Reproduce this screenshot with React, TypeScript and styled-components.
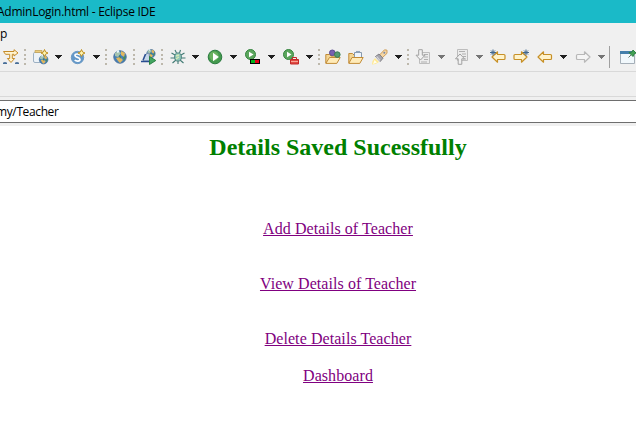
import React from "react";
import styled, { createGlobalStyle } from "styled-components";

const GlobalStyle = createGlobalStyle`
  * { box-sizing: border-box; }
  body { margin: 0; background: #fff; overflow: hidden; }
`;

const Window = styled.div`
  display: flex;
  flex-direction: column;
  width: 636px;
  height: 446px;
  overflow: hidden;
  background: #fff;
  color: #000;
  font-family: "Open Sans", "Noto Sans", sans-serif;
  font-size: 12px;
`;

const TitleBar = styled.header`
  display: flex;
  flex: none;
  height: 23px;
  line-height: 23px;
  background: #1abac8;
  white-space: pre;
`;

const TitleText = styled.span`
  margin-left: -3px;
  letter-spacing: -0.26px;
`;

const MenuBar = styled.nav`
  flex: none;
  height: 21px;
  line-height: 21px;
  background: #f0f0f0;
`;

const ToolBar = styled.div`
  display: flex;
  flex: none;
  align-items: center;
  height: 28px;
  padding-bottom: 1px;
  background: #f0f0f0;
  border-bottom: 1px solid #d9d9d9;
`;

const Slot = styled.span<{ $gap: number; $w: number }>`
  display: flex;
  flex: none;
  align-items: center;
  justify-content: center;
  width: ${(p) => p.$w}px;
  height: 26px;
  margin-left: ${(p) => p.$gap}px;
  svg { display: block; flex: none; }
`;

const Divider = styled.span`
  width: 1px;
  height: 22px;
  background: #a0a0a0;
`;

const TabStrip = styled.div`
  flex: none;
  height: 25px;
  background: #f0f0f0;
  border-bottom: 1px solid #d9d9d9;
`;

const AddressRow = styled.div`
  flex: none;
  padding: 3px 0;
  background: #f0f0f0;
`;

const AddressField = styled.div`
  height: 23px;
  line-height: 21px;
  background: #fff;
  border: solid #6e6e6e;
  border-width: 1px 0;
  white-space: pre;
  letter-spacing: -0.38px;
  text-indent: -4px;
`;

const Page = styled.main`
  display: flex;
  flex-direction: column;
  align-items: center;
  padding: 8px 0 0 40px;
  font-family: "Liberation Serif", "Times New Roman", serif;
`;

const Heading = styled.h2`
  margin: 0 0 59px;
  color: #008000;
  font-size: 24px;
  line-height: 27px;
  font-weight: bold;
`;

const PageLink = styled.a<{ $after: number }>`
  margin-bottom: ${(p) => p.$after}px;
  color: #800080;
  font-size: 16px;
  line-height: 18px;
  letter-spacing: 0.07px;
  text-decoration: underline;
  text-decoration-thickness: 1px;
  text-decoration-skip-ink: none;
`;

type Kids = { children: React.ReactNode };
const Icon = ({ children }: Kids) => (
  <svg width="16" height="16" viewBox="0 0 16 16" fill="none">{children}</svg>
);

const Caret = ({ dim }: { dim?: boolean }) => (
  <svg width="7" height="4" viewBox="0 0 7 4" shapeRendering="crispEdges">
    <path d="M0 0H7V1H6V2H5V3H4V4H3V3H2V2H1V1H0Z" fill={dim ? "#757575" : "#202020"} />
  </svg>
);

const Grip = () => (
  <svg width="2" height="16" viewBox="0 0 2 16" shapeRendering="crispEdges">
    {[0, 5, 9, 14].map((y) => <path key={y} d={`M0 ${y}h2v2H0z`} fill="#bdb8ac" />)}
  </svg>
);

const Sparkle = () => (
  <path d="M11.5 .5L12.6 3L15 4L12.6 5.2L11.5 7.5L10.4 5.2L8 4L10.4 3Z" fill="#fff5b0" stroke="#c09022" strokeWidth="1" />
);

const Earth = () => (
  <>
    <circle cx="8" cy="8" r="6.2" fill="#4380b9" stroke="#4b719c" />
    <path d="M3 4L6 2L9 4L6 8L3 7Z" fill="#a6c4b0" />
    <path d="M9 2L13 4L12 8L9 6ZM4 9L8 8L11 11L8 14L6 12Z" fill="#e0b75f" />
    <path d="M7 6L9 8L8 10Z" fill="#397c4d" />
    <path d="M11 8L14 7L12 12Z" fill="#4c8d55" />
    <path d="M5 3L7 2" stroke="#e8faff" strokeWidth="2" />
  </>
);

const StepFilter = () => (
  <Icon>
    <path d="M.5 2.5H11V.7L15 3.9L11 7V5.3H9.3V9.5H11.6L8 13.5L4.4 9.5H6.7V5.3H2.5Z" fill="#fff4d0" stroke="#c58b2a" />
    <path d="M0 14.2H4M2 13V15M12 14.2H16M14 13V15" stroke="#496f99" strokeWidth="1.4" />
  </Icon>
);
const NewProject = () => (
  <Icon>
    <path d="M.5 4.5Q.5 3.5 2 3.5H10.5V13.5H2Q.5 13.5 .5 12Z" fill="#edf3f8" stroke="#9db1c3" />
    <path d="M2 1.5H9V3.5H2Z" fill="#edce7c" stroke="#c5a45a" strokeWidth=".8" />
    <g transform="translate(5 5) scale(.7)"><Earth /></g>
    <Sparkle />
  </Icon>
);
const Servlet = () => (
  <Icon>
    <circle cx="7.5" cy="8.5" r="6.2" fill="#6498c9" stroke="#6c9ac4" />
    <path d="M10 6.2C8.5 4.6 5 4.5 5 6.5C5 8.8 10 8 10 10.4C10 12.5 6.2 12.5 4.7 11" stroke="#fff" strokeWidth="1.7" />
    <Sparkle />
  </Icon>
);
const ServiceExplorer = () => (
  <Icon>
    <g transform="translate(4.5 -.8) scale(.68)"><Earth /></g>
    <path d="M2 12L5 5L8 4L9 12Z" fill="#c6d6ea" stroke="#7890ad" />
    <path d="M0 12.5H8M4.5 5L2 11" stroke="#294d91" strokeWidth="1.4" />
    <path d="M8.5 7.5L14.8 11.5L8.5 15.5Z" fill="#42a560" stroke="#2a8044" />
  </Icon>
);
const Bug = () => (
  <Icon>
    <path d="M5 1L6.5 4M10.5 1L9.5 4M1.5 4L5 6M14.5 4L11 6M.5 9H5M11 9H15.5M2.5 14L6 11M13.5 14L10 11M8 15V12" stroke="#427b74" strokeWidth="1.1" />
    <ellipse cx="8" cy="8" rx="3.4" ry="4.1" fill="#91c6b7" stroke="#4a8180" />
    <path d="M6 7L9 6M6 10L9 8" stroke="#d5eab5" strokeWidth="1.5" />
  </Icon>
);
const Run = () => (
  <Icon>
    <circle cx="8" cy="8" r="6.8" fill="#43994d" stroke="#2b7b40" />
    <circle cx="7" cy="7" r="4.6" fill="#76b965" fillOpacity=".75" />
    <path d="M6 3.8L11.8 8L6 12.2Z" fill="#fff" />
  </Icon>
);
const Coverage = () => (
  <Icon>
    <circle cx="5.5" cy="5.5" r="5" fill="#5ba65d" stroke="#35853f" />
    <path d="M4 2.7L8.5 5.5L4 8.3Z" fill="#fff" />
    <path d="M5 10H15V15H5Z" fill="#000" />
    <path d="M6 11H10V14H6Z" fill="#00b51d" /><path d="M10 11H14V14H10Z" fill="#e00018" />
  </Icon>
);
const ExternalTools = () => (
  <Icon>
    <circle cx="5.5" cy="5.5" r="5" fill="#5ba65d" stroke="#35853f" />
    <path d="M4 2.7L8.5 5.5L4 8.3Z" fill="#fff" />
    <path d="M9.5 10V8.5H13.5V10" stroke="#c32828" />
    <path d="M7.5 10.5H15.5V15H7.5Z" fill="#e24b44" stroke="#c32828" />
    <path d="M8 12.5H15" stroke="#f7a696" />
  </Icon>
);
const FolderShape = () => (
  <>
    <path d="M.8 14V5.5H4.5L6 7H12.5V9" fill="#f3d594" stroke="#c18b37" />
    <path d="M.8 14.4L4.5 8.5H15.2L11.8 14.4Z" fill="#ffebb8" stroke="#c18b37" />
  </>
);
const OpenType = () => (
  <Icon><FolderShape /><circle cx="7.3" cy="3.8" r="2.8" fill="#7861af" stroke="#5b4a92" /><circle cx="12.3" cy="5.6" r="2.8" fill="#579b70" stroke="#397b53" /></Icon>
);
const OpenTask = () => (
  <Icon>
    <path d="M.8 14V4.5H4.5L6 6H13.5V9" fill="#f3d594" stroke="#c18b37" />
    <path d="M6.5 3.5H13.5V9H6.5Z" fill="#eef5fc" stroke="#8799ad" />
    <path d="M8 2.7H12" stroke="#91a6bd" strokeWidth="1.5" />
    <path d="M.8 14.4L4 8.5H15.2L11.8 14.4Z" fill="#ffebb8" stroke="#c18b37" />
  </Icon>
);
const Torch = () => (
  <Icon>
    <path d="M3 9L7 13L3.5 15L0 15.5L.5 12Z" fill="#ffe891" />
    <path d="M2.5 11L5 13.5L1 15Z" fill="#fffdf0" />
    <path d="M7.5 6L12.5 .8L15 1.2L15 4.3L10 9Z" fill="#f5d6a4" stroke="#cf9d58" />
    <path d="M3.5 7.5L7 5L11 9.2L8.2 12.5Z" fill="#a5a5ad" stroke="#817f84" />
    <path d="M4.5 7.5L8 11.5" stroke="#d5d5dc" strokeWidth="1.2" />
    <circle cx="12.3" cy="3.8" r="1" fill="#7787a6" />
  </Icon>
);
const Annotation = ({ up }: { up?: boolean }) => (
  <Icon>
    <path d={up ? "M4.5 .5H14.5V11.5H4.5Z" : "M4.5 3.5H14.5V14.5H4.5Z"} fill="#ececec" stroke="#bdbdbd" />
    <path d={up ? "M6 2.5H12M9 5H13M10 7.5H13M10 10H13" : "M9 5.5H13M9 8H13M9 10.5H13M6 13H12"} stroke="#b0b0b0" />
    <path d={up ? "M5.2 15.3H8.8V9.8H11.5L7 5L2.5 9.8H5.2Z" : "M3.7 .7H7.3V6.2H10L5.5 11L1 6.2H3.7Z"} fill="#f1f1f1" stroke="#a2a2a2" />
  </Icon>
);
const Star = ({ right }: { right?: boolean }) => (
  <path transform={right ? "translate(10 0)" : undefined} d="M3 .5V6.5M0 3.5H6M1 1.5L5 5.5M5 1.5L1 5.5" stroke="#42688e" strokeWidth="1" />
);
const Arrow = ({ forward, dim, star }: { forward?: boolean; dim?: boolean; star?: boolean }) => (
  <Icon>
    <path
      transform={forward ? "matrix(-1 0 0 1 16 0)" : undefined}
      d={star
        ? "M2 8L7.5 2.8V5.5H14Q15 5.5 15 6.5V9.5Q15 10.5 14 10.5H7.5V13.2Z"
        : "M1 8L6.5 2.8V5.5H13.5Q14.5 5.5 14.5 6.5V9.5Q14.5 10.5 13.5 10.5H6.5V13.2Z"}
      fill={dim ? "#f5f5f5" : "#fff3cb"}
      stroke={dim ? "#b8b8b8" : "#c79027"}
      strokeWidth="1.2"
      strokeLinejoin="round"
    />
    {star && <Star right={forward} />}
  </Icon>
);
const PinEditor = () => (
  <Icon>
    <path d="M.5 2.5H14.5V14.5H.5Z" fill="#f1f8fc" stroke="#a5afb8" />
    <path d="M0 2H12V5H0Z" fill="#447fac" />
    <path d="M8.5 8.5L11 6" stroke="#647a6c" />
    <path d="M9 3.5L13 7.5L14 5L16 4L13 1L12 3Z" fill="#43a253" stroke="#2c8141" />
  </Icon>
);

const tools: { x: number; w?: number; el: React.ReactNode }[] = [
  { x: 3, el: <StepFilter /> },
  { x: 24, w: 2, el: <Grip /> },
  { x: 33, el: <NewProject /> },
  { x: 55, w: 7, el: <Caret /> },
  { x: 70, el: <Servlet /> },
  { x: 93, w: 7, el: <Caret /> },
  { x: 105, w: 2, el: <Grip /> },
  { x: 112, el: <Icon><Earth /></Icon> },
  { x: 133, w: 2, el: <Grip /> },
  { x: 141, el: <ServiceExplorer /> },
  { x: 161, w: 2, el: <Grip /> },
  { x: 170, el: <Bug /> },
  { x: 192, w: 7, el: <Caret /> },
  { x: 207, el: <Run /> },
  { x: 230, w: 7, el: <Caret /> },
  { x: 245, el: <Coverage /> },
  { x: 268, w: 7, el: <Caret /> },
  { x: 283, el: <ExternalTools /> },
  { x: 306, w: 7, el: <Caret /> },
  { x: 318, w: 2, el: <Grip /> },
  { x: 325, el: <OpenType /> },
  { x: 348, el: <OpenTask /> },
  { x: 372, el: <Torch /> },
  { x: 395, w: 7, el: <Caret /> },
  { x: 407, w: 2, el: <Grip /> },
  { x: 415, el: <Annotation /> },
  { x: 438, w: 7, el: <Caret dim /> },
  { x: 453, el: <Annotation up /> },
  { x: 476, w: 7, el: <Caret dim /> },
  { x: 490, el: <Arrow star /> },
  { x: 513, el: <Arrow forward star /> },
  { x: 537, el: <Arrow /> },
  { x: 560, w: 7, el: <Caret /> },
  { x: 575, el: <Arrow forward dim /> },
  { x: 598, w: 7, el: <Caret dim /> },
  { x: 609, w: 1, el: <Divider /> },
  { x: 620, el: <PinEditor /> },
];

const links = [
  { label: "Add Details of Teacher", after: 37 },
  { label: "View Details of Teacher", after: 37 },
  { label: "Delete Details Teacher", after: 19 },
  { label: "Dashboard", after: 0 },
];

export default function App() {
  return (
    <>
      <GlobalStyle />
      <Window>
        <TitleBar><TitleText>AdminLogin.html - Eclipse IDE</TitleText></TitleBar>
        <MenuBar>p</MenuBar>
        <ToolBar>
          {tools.map((tool, i) => {
            const prev = tools[i - 1];
            const end = prev ? prev.x + (prev.w ?? 16) : 0;
            return <Slot key={tool.x} $gap={tool.x - end} $w={tool.w ?? 16}>{tool.el}</Slot>;
          })}
        </ToolBar>
        <TabStrip />
        <AddressRow><AddressField>my/Teacher</AddressField></AddressRow>
        <Page>
          <Heading>Details Saved Sucessfully</Heading>
          {links.map((l) => <PageLink key={l.label} $after={l.after}>{l.label}</PageLink>)}
        </Page>
      </Window>
    </>
  );
}
